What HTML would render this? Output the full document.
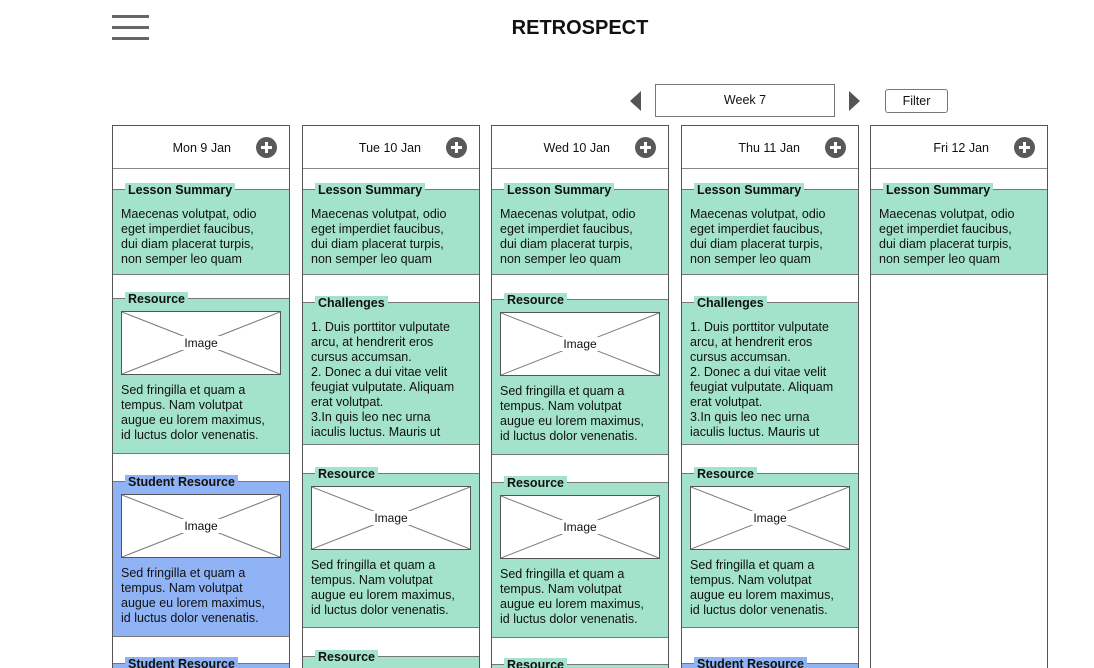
<!DOCTYPE html>
<html><head><meta charset="utf-8"><style>
html,body{margin:0;width:1094px;height:668px;overflow:hidden}
body{background:#fff;font-family:"Liberation Sans",Arial,sans-serif;color:#111;position:relative}
.col{position:absolute;top:125px;width:176px;height:542px;border:1px solid #555;border-bottom:none;background:#fff;overflow:hidden}
.hd{position:absolute;left:0;top:0;width:176px;height:42px;border-bottom:1px solid #888;font-size:12.5px}
.hd span{position:absolute;right:58px;top:15px}
.plus{position:absolute;right:12px;top:11px;width:21px;height:21px;border-radius:50%;background:#595959}
.plus:before{content:"";position:absolute;left:5px;top:9px;width:11px;height:3px;background:#fff}
.plus:after{content:"";position:absolute;left:9px;top:5px;width:3px;height:11px;background:#fff}
.p{position:absolute;left:0;width:176px;border-top:1px solid #777;border-bottom:1px solid #777;background:#a3e2cb;font-size:12.5px;line-height:15px}
.p.b{background:#8fb3f5}
.t{position:absolute;left:12px;top:-7px;font-weight:bold;padding:0 3px;background:inherit;line-height:15px}
.tx{position:absolute;left:8px;top:17px;width:152px}
.img{position:absolute;left:8px;top:12px;width:158px;height:62px;border:1px solid #555;background:#fff}
.img svg{position:absolute;left:0;top:0}
.img span{position:absolute;left:0;right:0;top:24px;text-align:center;font-size:12px;}
.img span i{font-style:normal;background:#fff;padding:0 4px}
</style></head><body>
<div style="position:absolute;left:112px;top:15px;width:37px;height:3px;background:#666"></div>
<div style="position:absolute;left:112px;top:26px;width:37px;height:3px;background:#666"></div>
<div style="position:absolute;left:112px;top:37px;width:37px;height:3px;background:#666"></div>
<div style="position:absolute;left:66px;width:1028px;top:17px;text-align:center;font-weight:bold;font-size:20px">RETROSPECT</div>
<div style="position:absolute;left:630px;top:91px;width:0;height:0;border-top:10px solid transparent;border-bottom:10px solid transparent;border-right:11px solid #555"></div>
<div style="position:absolute;left:655px;top:84px;width:178px;height:31px;border:1px solid #777;font-size:12.5px;text-align:center;line-height:31px">Week 7</div>
<div style="position:absolute;left:849px;top:91px;width:0;height:0;border-top:10px solid transparent;border-bottom:10px solid transparent;border-left:11px solid #555"></div>
<div style="position:absolute;left:885px;top:89px;width:61px;height:22px;border:1px solid #777;border-radius:3px;font-size:12.5px;text-align:center;line-height:23px">Filter</div>

<div class="col" style="left:112px">
<div class="hd"><span>Mon 9 Jan</span><div class="plus"></div></div>
<div class="p" style="top:63px;height:84px"><div class="t">Lesson Summary</div><div class="tx">Maecenas volutpat, odio eget imperdiet faucibus, dui diam placerat turpis, non semper leo quam</div></div>
<div class="p" style="top:172px;height:154px"><div class="t">Resource</div><div class="img"><svg width="158" height="62"><line x1="0" y1="0" x2="158" y2="62" stroke="#777"/><line x1="158" y1="0" x2="0" y2="62" stroke="#777"/></svg><span><i>Image</i></span></div><div class="tx" style="top:84px">Sed fringilla et quam a tempus. Nam volutpat augue eu lorem maximus, id luctus dolor venenatis.</div></div>
<div class="p b" style="top:355px;height:154px"><div class="t">Student Resource</div><div class="img"><svg width="158" height="62"><line x1="0" y1="0" x2="158" y2="62" stroke="#777"/><line x1="158" y1="0" x2="0" y2="62" stroke="#777"/></svg><span><i>Image</i></span></div><div class="tx" style="top:84px">Sed fringilla et quam a tempus. Nam volutpat augue eu lorem maximus, id luctus dolor venenatis.</div></div>
<div class="p b" style="top:537px;height:154px"><div class="t">Student Resource</div></div>
</div>

<div class="col" style="left:302px">
<div class="hd"><span>Tue 10 Jan</span><div class="plus"></div></div>
<div class="p" style="top:63px;height:84px"><div class="t">Lesson Summary</div><div class="tx">Maecenas volutpat, odio eget imperdiet faucibus, dui diam placerat turpis, non semper leo quam</div></div>
<div class="p" style="top:176px;height:141px"><div class="t">Challenges</div><div class="tx">1. Duis porttitor vulputate arcu, at hendrerit eros cursus accumsan.<br>2. Donec a dui vitae velit feugiat vulputate. Aliquam erat volutpat.<br>3.In quis leo nec urna iaculis luctus. Mauris ut</div></div>
<div class="p" style="top:347px;height:153px"><div class="t">Resource</div><div class="img"><svg width="158" height="62"><line x1="0" y1="0" x2="158" y2="62" stroke="#777"/><line x1="158" y1="0" x2="0" y2="62" stroke="#777"/></svg><span><i>Image</i></span></div><div class="tx" style="top:84px">Sed fringilla et quam a tempus. Nam volutpat augue eu lorem maximus, id luctus dolor venenatis.</div></div>
<div class="p" style="top:530px;height:154px"><div class="t">Resource</div></div>
</div>

<div class="col" style="left:491px">
<div class="hd"><span>Wed 10 Jan</span><div class="plus"></div></div>
<div class="p" style="top:63px;height:84px"><div class="t">Lesson Summary</div><div class="tx">Maecenas volutpat, odio eget imperdiet faucibus, dui diam placerat turpis, non semper leo quam</div></div>
<div class="p" style="top:173px;height:154px"><div class="t">Resource</div><div class="img"><svg width="158" height="62"><line x1="0" y1="0" x2="158" y2="62" stroke="#777"/><line x1="158" y1="0" x2="0" y2="62" stroke="#777"/></svg><span><i>Image</i></span></div><div class="tx" style="top:84px">Sed fringilla et quam a tempus. Nam volutpat augue eu lorem maximus, id luctus dolor venenatis.</div></div>
<div class="p" style="top:356px;height:154px"><div class="t">Resource</div><div class="img"><svg width="158" height="62"><line x1="0" y1="0" x2="158" y2="62" stroke="#777"/><line x1="158" y1="0" x2="0" y2="62" stroke="#777"/></svg><span><i>Image</i></span></div><div class="tx" style="top:84px">Sed fringilla et quam a tempus. Nam volutpat augue eu lorem maximus, id luctus dolor venenatis.</div></div>
<div class="p" style="top:538px;height:154px"><div class="t">Resource</div></div>
</div>

<div class="col" style="left:681px">
<div class="hd"><span>Thu 11 Jan</span><div class="plus"></div></div>
<div class="p" style="top:63px;height:84px"><div class="t">Lesson Summary</div><div class="tx">Maecenas volutpat, odio eget imperdiet faucibus, dui diam placerat turpis, non semper leo quam</div></div>
<div class="p" style="top:176px;height:141px"><div class="t">Challenges</div><div class="tx">1. Duis porttitor vulputate arcu, at hendrerit eros cursus accumsan.<br>2. Donec a dui vitae velit feugiat vulputate. Aliquam erat volutpat.<br>3.In quis leo nec urna iaculis luctus. Mauris ut</div></div>
<div class="p" style="top:347px;height:153px"><div class="t">Resource</div><div class="img"><svg width="158" height="62"><line x1="0" y1="0" x2="158" y2="62" stroke="#777"/><line x1="158" y1="0" x2="0" y2="62" stroke="#777"/></svg><span><i>Image</i></span></div><div class="tx" style="top:84px">Sed fringilla et quam a tempus. Nam volutpat augue eu lorem maximus, id luctus dolor venenatis.</div></div>
<div class="p b" style="top:537px;height:154px"><div class="t">Student Resource</div></div>
</div>

<div class="col" style="left:870px">
<div class="hd"><span>Fri 12 Jan</span><div class="plus"></div></div>
<div class="p" style="top:63px;height:84px"><div class="t">Lesson Summary</div><div class="tx">Maecenas volutpat, odio eget imperdiet faucibus, dui diam placerat turpis, non semper leo quam</div></div>
</div>
</body></html>
